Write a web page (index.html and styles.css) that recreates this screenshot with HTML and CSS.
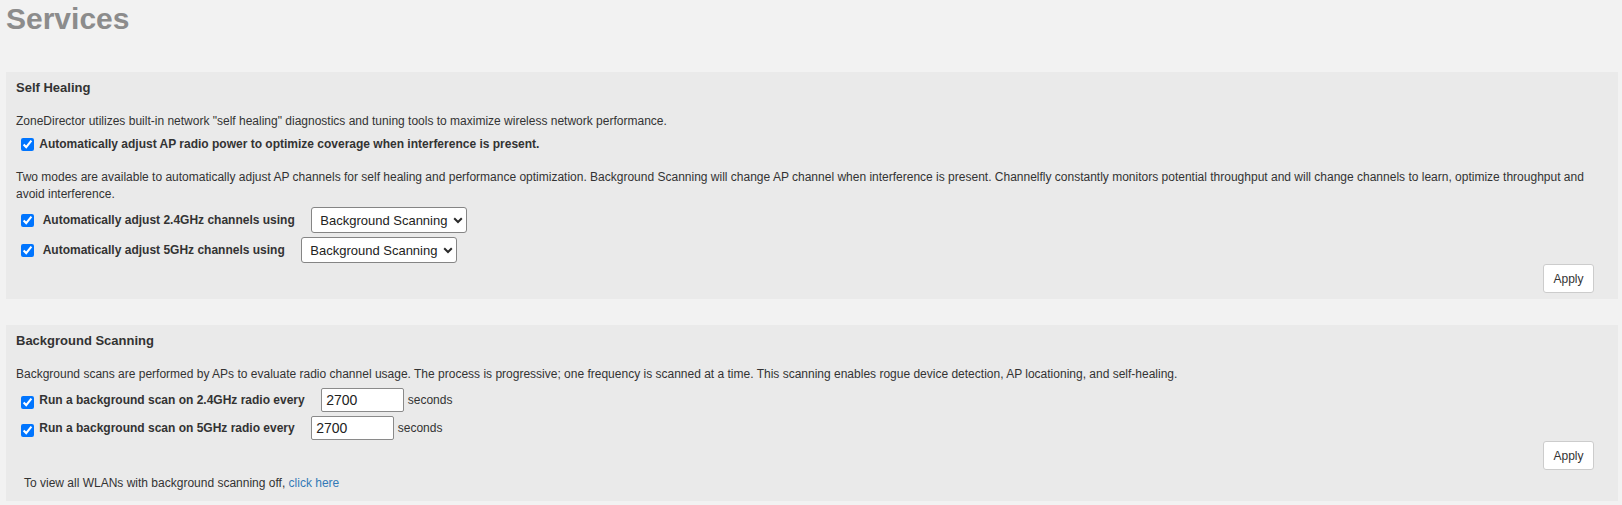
FILE: index.html
```html
<!DOCTYPE html>
<html lang="en">
<head>
<meta charset="utf-8">
<title>Services</title>
<link rel="stylesheet" href="styles.css">
</head>
<body>
<div class="page">
  <h1 class="title">Services</h1>

  <section class="panel">
    <h2 class="panel-title">Self Healing</h2>
    <p class="desc">ZoneDirector utilizes built-in network "self healing" diagnostics and tuning tools to maximize wireless network performance.</p>
    <div class="row row-check">
      <input type="checkbox" class="cb" checked>
      <label class="lbl">Automatically adjust AP radio power to optimize coverage when interference is present.</label>
    </div>
    <p class="desc desc-modes">Two modes are available to automatically adjust AP channels for self healing and performance optimization. Background Scanning will change AP channel when interference is present. Channelfly constantly monitors potential throughput and will change channels to learn, optimize throughput and avoid interference.</p>
    <div class="row row-select row-first">
      <input type="checkbox" class="cb cb-wide" checked>
      <label class="lbl lbl-gap">Automatically adjust 2.4GHz channels using</label>
      <span class="select-wrap">
        <select class="select"><option>Background Scanning</option><option>ChannelFly</option></select>
        <svg class="chev" width="10" height="7" viewBox="0 0 10 7"><path d="M1.2 1.3 L5 5 L8.8 1.3" fill="none" stroke="#2b2b2b" stroke-width="2"/></svg>
      </span>
    </div>
    <div class="row row-select">
      <input type="checkbox" class="cb cb-wide" checked>
      <label class="lbl lbl-gap">Automatically adjust 5GHz channels using</label>
      <span class="select-wrap">
        <select class="select"><option>Background Scanning</option><option>ChannelFly</option></select>
        <svg class="chev" width="10" height="7" viewBox="0 0 10 7"><path d="M1.2 1.3 L5 5 L8.8 1.3" fill="none" stroke="#2b2b2b" stroke-width="2"/></svg>
      </span>
    </div>
    <div class="actions actions-tight">
      <button class="btn" type="button">Apply</button>
    </div>
  </section>

  <section class="panel panel-scan">
    <h2 class="panel-title">Background Scanning</h2>
    <p class="desc">Background scans are performed by APs to evaluate radio channel usage. The process is progressive; one frequency is scanned at a time. This scanning enables rogue device detection, AP locationing, and self-healing.</p>
    <div class="row row-scan row-scan-first">
      <input type="checkbox" class="cb cb-low" checked>
      <label class="lbl lbl-gap">Run a background scan on 2.4GHz radio every</label>
      <input type="text" class="num" value="2700">
      <span class="unit">seconds</span>
    </div>
    <div class="row row-scan">
      <input type="checkbox" class="cb cb-low" checked>
      <label class="lbl lbl-gap">Run a background scan on 5GHz radio every</label>
      <input type="text" class="num" value="2700">
      <span class="unit">seconds</span>
    </div>
    <div class="actions actions-tight">
      <button class="btn" type="button">Apply</button>
    </div>
    <p class="note">To view all WLANs with background scanning off, <a class="link" href="#">click here</a></p>
  </section>
</div>
</body>
</html>
```

FILE: styles.css
```css
body {
  margin: 0;
  background: #f2f2f2;
  font-family: "Liberation Sans", Arial, sans-serif;
  color: #333;
}

.page {
  padding: 0 4px 0 6px;
}

.title {
  margin: 0;
  padding-top: 2px;
  font-size: 30px;
  line-height: 34px;
  font-weight: bold;
  color: #8c8c8c;
}

.panel {
  background: #eaeaea;
  padding: 8px 24px 6px 10px;
  margin-top: 36px;
}

.panel + .panel {
  margin-top: 26px;
}

.panel-scan {
  padding-bottom: 9px;
}

.panel-title {
  margin: 0 0 18px;
  font-size: 13px;
  line-height: 15px;
  font-weight: bold;
  color: #333;
}

.desc {
  margin: 0;
  font-size: 12px;
  line-height: 17px;
}

.desc-modes {
  margin-top: 16px;
}

.row {
  display: flex;
  align-items: center;
  font-size: 12px;
}

.row-check {
  height: 18px;
  margin-top: 5px;
}

.row-select {
  height: 30px;
}

.row-first {
  margin-top: 2px;
}

.row-scan {
  height: 28px;
}

.row-scan-first {
  margin-top: 3px;
}

.cb {
  flex: none;
  width: 13px;
  height: 13px;
  margin: 0 5.3px 0 5px;
}

.cb-wide {
  margin-right: 8.7px;
  margin-top: 1px;
}

.cb-low {
  margin-top: 4px;
}

.lbl {
  font-weight: bold;
}

.lbl-gap {
  margin-right: 16.5px;
}

.select-wrap {
  position: relative;
  display: inline-block;
  height: 26px;
}

.select {
  -webkit-appearance: none;
  appearance: none;
  box-sizing: border-box;
  width: 156px;
  height: 26px;
  margin: 0;
  padding: 0 0 0 8px;
  border: 1px solid #858585;
  border-radius: 3px;
  background: #fff;
  font-family: "Liberation Sans", Arial, sans-serif;
  font-size: 13px;
  color: #222;
}

.chev {
  position: absolute;
  right: 4px;
  top: 10px;
  pointer-events: none;
}

.num {
  box-sizing: border-box;
  width: 83px;
  height: 24px;
  margin: 0 3.5px 0 0;
  padding: 0 4px;
  border: 1px solid #8a8a8a;
  border-radius: 2px;
  background: #fff;
  font-family: "Liberation Sans", Arial, sans-serif;
  font-size: 14px;
  color: #222;
}

.unit {
  font-size: 12px;
}

.actions {
  display: flex;
  justify-content: flex-end;
}

.actions-tight {
  margin-top: -1px;
}

.btn {
  box-sizing: border-box;
  width: 51px;
  height: 29px;
  padding: 0;
  border: 1px solid #ccc;
  border-radius: 3px;
  background: #fff;
  font-family: "Liberation Sans", Arial, sans-serif;
  font-size: 12px;
  color: #333;
}

.note {
  margin: 5px 0 0 8px;
  font-size: 12px;
  line-height: 17px;
}

.link {
  color: #337ab7;
  text-decoration: none;
}
```
